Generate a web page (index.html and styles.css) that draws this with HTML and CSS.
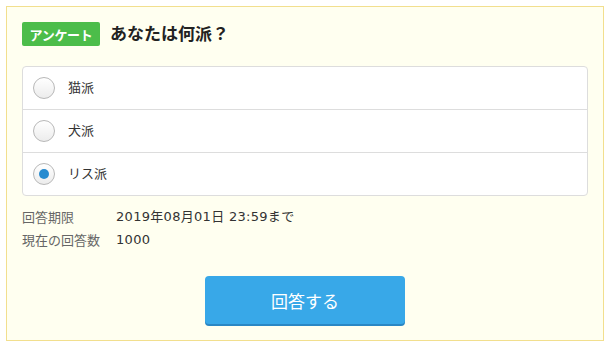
FILE: index.html
```html
<!DOCTYPE html>
<html lang="ja">
<head>
<meta charset="utf-8">
<link rel="stylesheet" href="styles.css">
</head>
<body>
<div class="card">
  <div class="head">
    <span class="badge">アンケート</span>
    <h1 class="title">あなたは何派？</h1>
  </div>
  <ul class="options">
    <li class="option"><span class="radio"></span><span class="label">猫派</span></li>
    <li class="option"><span class="radio"></span><span class="label">犬派</span></li>
    <li class="option"><span class="radio checked"></span><span class="label">リス派</span></li>
  </ul>
  <dl class="info">
    <div class="info-row"><dt>回答期限</dt><dd>2019年08月01日 23:59まで</dd></div>
    <div class="info-row"><dt>現在の回答数</dt><dd>1000</dd></div>
  </dl>
  <div class="actions">
    <button class="submit">回答する</button>
  </div>
</div>
</body>
</html>
```

FILE: styles.css
```css
* { box-sizing: border-box; }
body {
  margin: 0;
  font-family: "Noto Sans CJK JP", "Noto Sans", sans-serif;
  color: #333;
}
.card {
  margin: 6px 7px 0 6px;
  border: 1px solid #f2df8e;
  background: #fffff0;
  padding: 15px 15px 14px 15px;
}
.head {
  display: flex;
  align-items: center;
  height: 24px;
}
.badge {
  display: inline-flex;
  align-items: center;
  justify-content: center;
  width: 78px;
  height: 24px;
  background: #4cbd4a;
  color: #fff;
  font-size: 13px;
  font-weight: bold;
  border-radius: 2px;
  letter-spacing: -0.3px;
}
.title {
  margin: 0 0 2px 10px;
  font-size: 17px;
  font-weight: bold;
  color: #222;
  line-height: 22px;
}
.options {
  list-style: none;
  margin: 20px 0 0 0;
  padding: 0;
  background: #fff;
  border: 1px solid #ddd;
  border-radius: 4px;
}
.option {
  display: flex;
  align-items: center;
  height: 43px;
  padding-left: 10px;
  border-top: 1px solid #ddd;
  font-size: 13px;
}
.option:first-child {
  border-top: none;
  height: 42px;
}
.radio {
  width: 22px;
  height: 22px;
  border-radius: 50%;
  border: 1px solid #b8b8b8;
  background: linear-gradient(#ffffff, #ececec);
  display: flex;
  align-items: center;
  justify-content: center;
  flex: none;
}
.radio.checked::after {
  content: "";
  width: 10px;
  height: 10px;
  border-radius: 50%;
  background: #268bd0;
}
.label {
  margin-left: 13px;
  margin-bottom: 3px;
  color: #333;
}
.info {
  margin: 9px 0 0 0;
  font-size: 13px;
}
.info-row {
  display: flex;
  line-height: 23px;
}
.info dt {
  width: 94px;
  color: #666;
}
.info dd {
  margin: 0;
  color: #333;
  font-family: "DejaVu Sans", "Noto Sans CJK JP", sans-serif;
  letter-spacing: 0.3px;
}
.actions {
  display: flex;
  justify-content: center;
  margin-top: 25px;
}
.submit {
  width: 200px;
  height: 48px;
  border: none;
  border-radius: 4px;
  background: #38a8e8;
  box-shadow: 0 2px 0 #2a87c4;
  color: #fff;
  font-family: inherit;
  font-size: 17px;
  margin-bottom: 2px;
}
```
